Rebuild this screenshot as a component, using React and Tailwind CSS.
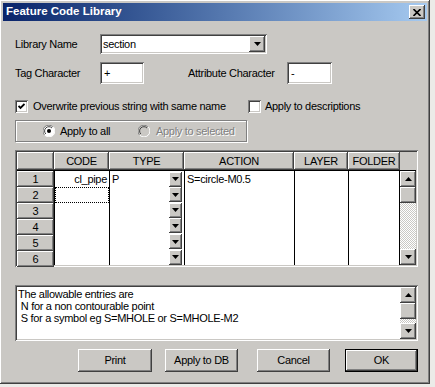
import React from "react";

const raised =
  "bg-[#cac8c4] shadow-[inset_-1px_-1px_#404040,inset_1px_1px_#ffffff,inset_-2px_-2px_#808080,inset_2px_2px_#cac8c4]";
const sunken =
  "shadow-[inset_1px_1px_#808080,inset_-1px_-1px_#ffffff,inset_2px_2px_#404040,inset_-2px_-2px_#cac8c4]";

function Arrow({ up = false }) {
  return (
    <svg width="7" height="4" viewBox="0 0 7 4" className="block">
      {up ? <path d="M0 4 L3.5 0 L7 4 Z" fill="#000" /> : <path d="M0 0 L7 0 L3.5 4 Z" fill="#000" />}
    </svg>
  );
}

function ArrowButton({ up, className = "" }) {
  return (
    <div className={`${raised} flex items-center justify-center shrink-0 ${className}`}>
      <Arrow up={up} />
    </div>
  );
}

function Track({ className = "" }) {
  return (
    <div
      className={`bg-[repeating-conic-gradient(#cac8c4_0_25%,#ffffff_0_50%)] bg-[length:2px_2px] ${className}`}
    />
  );
}

function Checkbox({ checked }) {
  return (
    <div className={`w-[13px] h-[13px] bg-white ${sunken} flex items-center justify-center shrink-0`}>
      {checked && (
        <svg width="7" height="7" viewBox="0 0 7 7">
          <path d="M0.5 3 L2.5 5 L6.5 1" stroke="#000" strokeWidth="1.8" fill="none" />
        </svg>
      )}
    </div>
  );
}

function Radio({ checked, disabled }) {
  return (
    <svg width="12" height="12" viewBox="0 0 12 12" className="shrink-0">
      <circle cx="6" cy="6" r="5.5" fill={disabled ? "#cac8c4" : "#ffffff"} />
      <path d="M10 2 A5.5 5.5 0 0 0 1.5 10" stroke="#808080" strokeWidth="1" fill="none" />
      <path d="M9 3 A4.2 4.2 0 0 0 2.8 9" stroke="#404040" strokeWidth="1" fill="none" />
      <path d="M1.8 10.2 A5.5 5.5 0 0 0 10.2 1.8" stroke="#ffffff" strokeWidth="1" fill="none" />
      {checked && <circle cx="6" cy="6" r="2" fill="#000" />}
    </svg>
  );
}

function Button({ children, def = false, className = "" }) {
  return (
    <div
      className={`h-[23px] ${raised} flex items-center justify-center text-black ${
        def ? "outline outline-1 outline-black -outline-offset-1 shadow-[inset_-2px_-2px_#404040,inset_2px_2px_#ffffff,inset_-3px_-3px_#808080,inset_1px_1px_#000000]" : ""
      } ${className}`}
    >
      {children}
    </div>
  );
}

const rows = [1, 2, 3, 4, 5, 6];

export default function App() {
  return (
    <div className="w-[435px] h-[387px] bg-[#ecebe8] overflow-hidden font-['Liberation_Sans',Arial,sans-serif] text-[11px] tracking-[-0.3px] text-black">
      <div className={`w-[430px] h-[384px] ${raised} flex flex-col p-[3px]`}>
        {/* title bar */}
        <div className="h-[18px] bg-gradient-to-r from-[#0a246a] to-[#a6caf0] flex items-center justify-between pl-[3px] pr-[2px]">
          <span className="text-white font-bold text-[11.5px] tracking-normal">Feature Code Library</span>
          <div className={`w-[16px] h-[14px] ${raised} flex items-center justify-center`}>
            <svg width="8" height="7" viewBox="0 0 8 7">
              <path d="M0.5 0 L7.5 7 M7.5 0 L0.5 7" stroke="#000" strokeWidth="1.6" />
            </svg>
          </div>
        </div>

        <div className="flex flex-col pl-[12px]">
          {/* library name */}
          <div className="flex items-center mt-[13px] h-[20px]">
            <span className="w-[85px]">Library Name</span>
            <div className={`w-[167px] h-[20px] bg-white ${sunken} flex items-center p-[2px]`}>
              <span className="flex-1 pl-[1px]">section</span>
              <ArrowButton className="w-[16px] h-[16px]" />
            </div>
          </div>

          {/* tag / attribute */}
          <div className="flex items-center mt-[8px] h-[22px]">
            <span className="w-[85px]">Tag Character</span>
            <div className={`w-[44px] h-[22px] bg-white ${sunken} flex items-center pl-[4px]`}>+</div>
            <span className="ml-[44px] w-[99px]">Attribute Character</span>
            <div className={`w-[45px] h-[22px] bg-white ${sunken} flex items-center pl-[4px]`}>-</div>
          </div>

          {/* checkboxes */}
          <div className="flex items-center mt-[16px] h-[13px]">
            <Checkbox checked />
            <span className="ml-[5px] w-[215px]">Overwrite previous string with same name</span>
            <Checkbox />
            <span className="ml-[4px]">Apply to descriptions</span>
          </div>

          {/* radio group */}
          <div className="mt-[7px] w-[232px] h-[22px] border border-[#808080] shadow-[inset_1px_1px_#ffffff,1px_1px_#ffffff] flex items-center pl-[27px]">
            <Radio checked />
            <span className="ml-[5px] w-[78px]">Apply to all</span>
            <Radio disabled />
            <span className="ml-[6px] text-[#808080] [text-shadow:1px_1px_#ffffff]">Apply to selected</span>
          </div>

          {/* grid */}
          <div className={`mt-[8px] w-[403px] h-[117px] ${sunken} p-[2px]`}>
            <div className="flex h-[18px]">
              <div className={`w-[37px] ${raised}`} />
              {[
                ["CODE", "w-[55px]"],
                ["TYPE", "w-[75px]"],
                ["ACTION", "w-[110px]"],
                ["LAYER", "w-[54px]"],
                ["FOLDER", "w-[52px]"],
              ].map(([t, w]) => (
                <div key={t} className={`${w} ${raised} flex items-center justify-center`}>
                  {t}
                </div>
              ))}
            </div>
            <div className="flex h-[95px] border-t border-black">
              <div className="w-[37px] flex flex-col">
                {rows.map((r) => (
                  <div key={r} className={`h-[16px] ${raised} flex items-center justify-center`}>
                    {r}
                  </div>
                ))}
              </div>
              <div className="w-[55px] bg-white border-l border-black flex flex-col">
                <div className="h-[16px] flex items-center justify-end pr-[2px]">cl_pipe</div>
                <div className="h-[16px] border border-dotted border-black" />
              </div>
              <div className="w-[75px] bg-white border-l border-black flex flex-col">
                {rows.map((r) => (
                  <div key={r} className="h-[16px] flex items-center pl-[2px] pr-[2px]">
                    <span className="flex-1">{r === 1 ? "P" : ""}</span>
                    <ArrowButton className="w-[13px] h-[15px]" />
                  </div>
                ))}
              </div>
              <div className="w-[110px] bg-white border-l border-black">
                <div className="h-[16px] flex items-center pl-[2px]">S=circle-M0.5</div>
              </div>
              <div className="w-[54px] bg-white border-l border-black" />
              <div className="w-[52px] bg-white border-l border-r border-black" />
              <div className="w-[16px] flex flex-col">
                <ArrowButton up className="h-[16px]" />
                <div className={`h-[16px] ${raised}`} />
                <Track className="flex-1" />
                <ArrowButton className="h-[16px]" />
              </div>
            </div>
          </div>

          {/* memo */}
          <div className={`mt-[18px] w-[403px] h-[56px] bg-white ${sunken} p-[2px] flex`}>
            <div className="flex-1 pl-[1px] pt-[1px] leading-[12px]">
              <div>The allowable entries are</div>
              <div>&nbsp;N for a non contourable point</div>
              <div>&nbsp;S for a symbol eg S=MHOLE or S=MHOLE-M2</div>
            </div>
            <div className="w-[16px] flex flex-col">
              <ArrowButton up className="h-[16px]" />
              <div className={`h-[16px] ${raised}`} />
              <Track className="flex-1" />
              <ArrowButton className="h-[16px]" />
            </div>
          </div>

          {/* buttons */}
          <div className="flex mt-[8px]">
            <Button className="ml-[63px] w-[74px]">Print</Button>
            <Button className="ml-[13px] w-[73px]">Apply to DB</Button>
            <Button className="ml-[19px] w-[73px]">Cancel</Button>
            <Button def className="ml-[15px] w-[73px]">OK</Button>
          </div>
        </div>
      </div>
    </div>
  );
}
